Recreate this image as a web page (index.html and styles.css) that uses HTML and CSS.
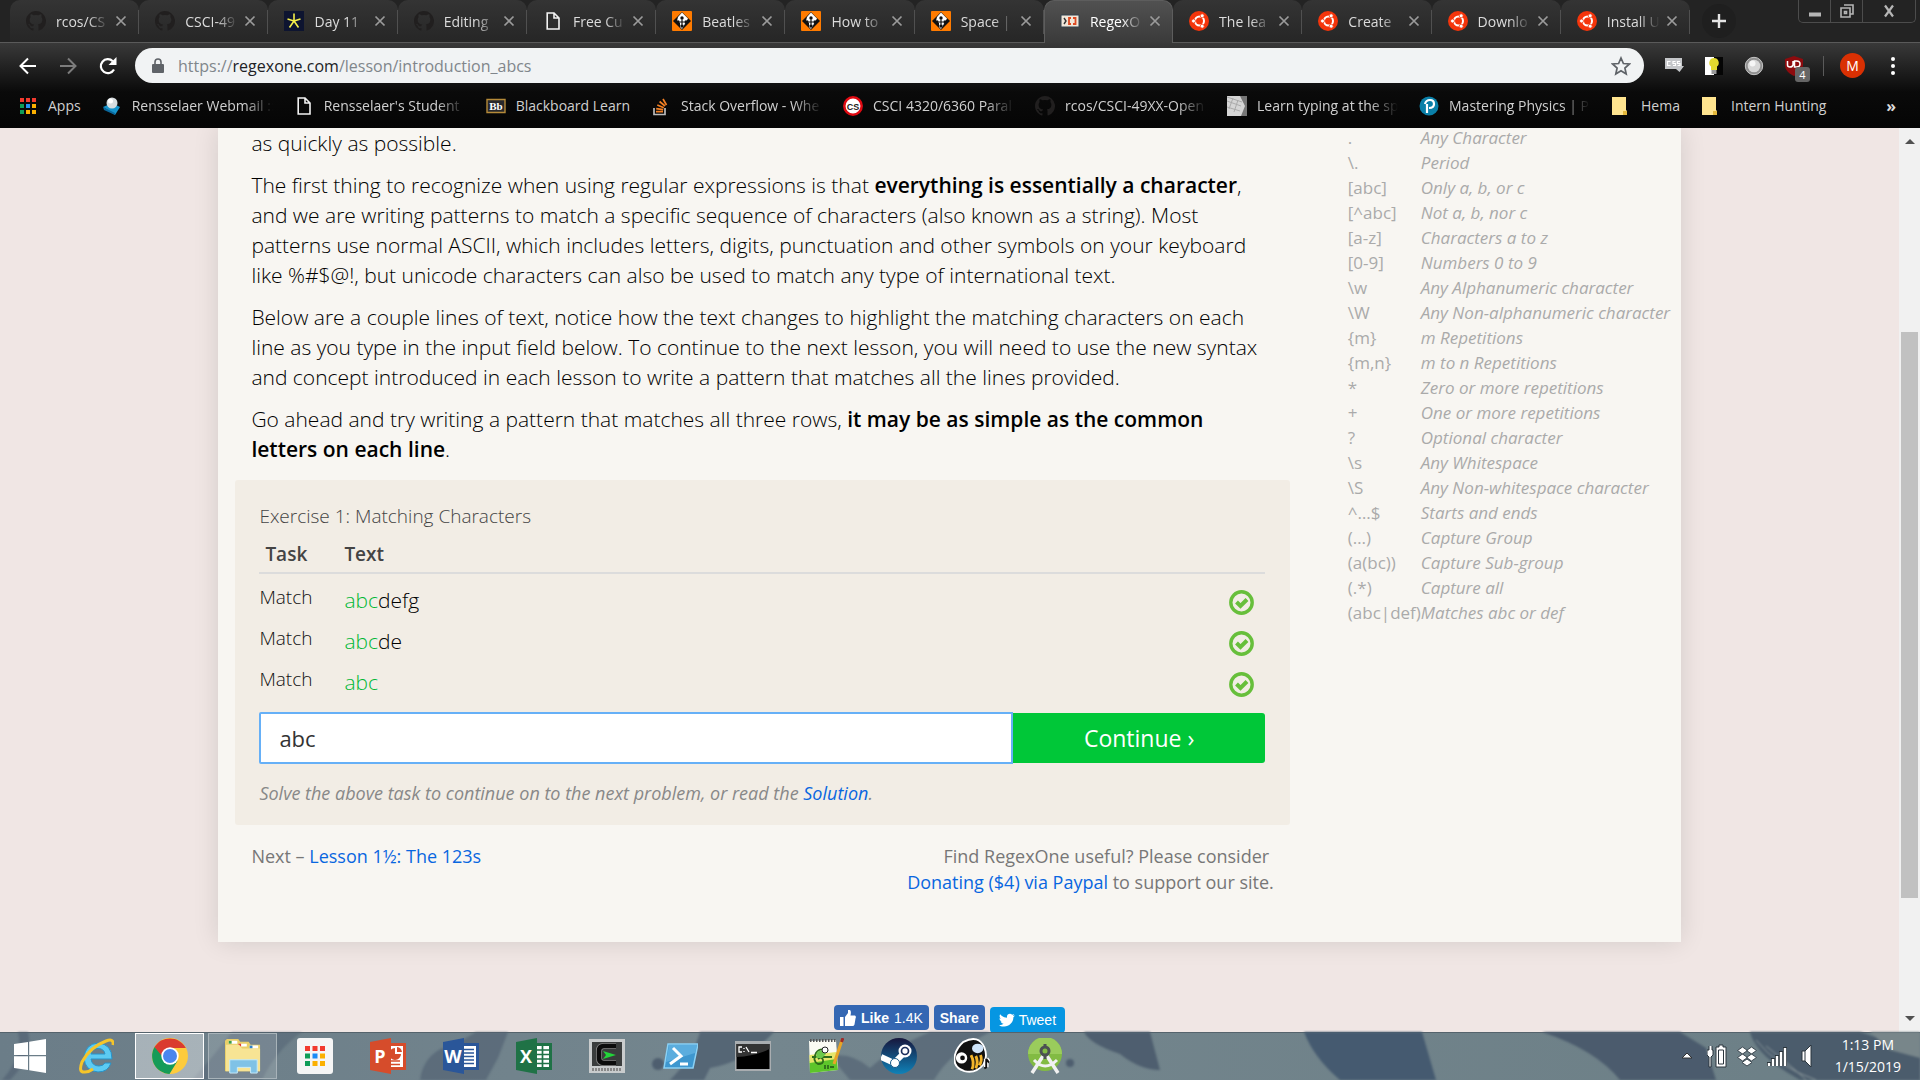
FILE: index.html
```html
<!DOCTYPE html>
<html lang="en">
<head>
<meta charset="utf-8">
<title>RegexOne - Learn Regular Expressions - Lesson 1: An Introduction, and the ABCs</title>
<link rel="stylesheet" href="styles.css">
</head>
<body>
<svg class="defs" aria-hidden="true">
  <symbol id="github" viewBox="0 0 16 16"><path fill="#211f1f" d="M8 0C3.6 0 0 3.6 0 8c0 3.5 2.3 6.500 5.500 7.600.4.1.5-.2.500-.4v-1.500c-2 .4-2.700-.9-2.900-1.400-.1-.3-.6-1-1-1.300-.3-.2-.8-.6 0-.6.700 0 1.200.6 1.300.9.8 1.300 2 .9 2.500.7.100-.6.300-1 .6-1.200-1.800-.2-3.600-.9-3.600-4 0-.9.300-1.600.8-2.100-.1-.2-.4-1 .1-2.100 0 0 .7-.2 2.200.8a7.500 7.500 0 0 1 4 0c1.500-1 2.200-.8 2.200-.8.400 1.100.2 1.900.1 2.100.5.600.8 1.300.8 2.100 0 3.100-1.900 3.700-3.600 3.900.3.300.5.800.5 1.500v3c0 .2.100.5.500.4A8 8 0 0 0 8 0z"/></symbol>
  <symbol id="ubuntu" viewBox="0 0 20 20"><circle cx="10" cy="10" r="10" fill="#f4350b"/><circle cx="10.500" cy="10" r="4.500" fill="none" stroke="#fff" stroke-width="2"/><g fill="#fff" stroke="#f4350b" stroke-width=".8"><circle cx="4.500" cy="10" r="2"/><circle cx="13.200" cy="4.800" r="2"/><circle cx="13.200" cy="15.200" r="2"/></g></symbol>
  <symbol id="diamond" viewBox="0 0 20 20"><rect width="20" height="20" rx="1" fill="#ff7b00"/><path d="M10 1l9 9-9 9-9-9z" fill="#111"/><path d="M10 1.500l6 6-2 3.500-4 7-2-2V12l-3-2 1-4z" fill="#fff"/><path d="M10 8.500v5M7.500 11h5" stroke="#111" stroke-width="1.200"/><g fill="#111"><circle cx="10" cy="7" r="1.700"/><circle cx="6" cy="11" r="1.700"/><circle cx="14" cy="11" r="1.700"/><circle cx="10" cy="15" r="1.700"/></g></symbol>
  <symbol id="page" viewBox="0 0 20 20"><path d="M4.200 2h6.800l5 5v11H4.200z M11 2v5h5" fill="none" stroke="#f2f2f2" stroke-width="1.600"/></symbol>
  <symbol id="cross" viewBox="0 0 12 12"><path d="M1.500 1.500l9 9m0-9l-9 9" stroke="#9b9b9b" stroke-width="1.700"/></symbol>
  <symbol id="folder" viewBox="0 0 20 20"><path d="M1 1h14v13l1 1v4H1z" fill="#ffe48f"/><path d="M12 15h4v4h-4z" fill="#e6b93c"/></symbol>
  <symbol id="check" viewBox="0 0 25 25"><circle cx="12.500" cy="12.500" r="10.700" fill="none" stroke="#67bf3b" stroke-width="3.400"/><path d="M7.500 12l4 4 6.500-6.500" fill="none" stroke="#67bf3b" stroke-width="4"/></symbol>
</svg>

<header class="browser">
  <div class="tabstrip">
    <ul class="tabs">
      <li class="tab"><svg class="fav"><use href="#github"/></svg><span class="tab-title">rcos/CS</span><button class="close" aria-label="Close tab"><svg><use href="#cross"/></svg></button></li>
      <li class="tab"><svg class="fav"><use href="#github"/></svg><span class="tab-title">CSCI-49</span><button class="close" aria-label="Close tab"><svg><use href="#cross"/></svg></button></li>
      <li class="tab"><svg class="fav" viewBox="0 0 20 20"><path fill="#0d1430" d="M0 0h20v20H0z"/><path d="M10 10V2.500M10 10l6.500-2M10 10l4.500 6.500M10 10l-4.500 6.500M10 10L3.500 8" stroke="#f5ef4a" stroke-width="1.600"/></svg><span class="tab-title">Day 11</span><button class="close" aria-label="Close tab"><svg><use href="#cross"/></svg></button></li>
      <li class="tab"><svg class="fav"><use href="#github"/></svg><span class="tab-title">Editing</span><button class="close" aria-label="Close tab"><svg><use href="#cross"/></svg></button></li>
      <li class="tab"><svg class="fav"><use href="#page"/></svg><span class="tab-title">Free Cu</span><button class="close" aria-label="Close tab"><svg><use href="#cross"/></svg></button></li>
      <li class="tab"><svg class="fav"><use href="#diamond"/></svg><span class="tab-title">Beatles</span><button class="close" aria-label="Close tab"><svg><use href="#cross"/></svg></button></li>
      <li class="tab"><svg class="fav"><use href="#diamond"/></svg><span class="tab-title">How to</span><button class="close" aria-label="Close tab"><svg><use href="#cross"/></svg></button></li>
      <li class="tab"><svg class="fav"><use href="#diamond"/></svg><span class="tab-title">Space |</span><button class="close" aria-label="Close tab"><svg><use href="#cross"/></svg></button></li>
      <li class="tab active"><svg class="fav" viewBox="0 0 20 20"><path fill="#f1e7da" stroke="#33434f" d="M1 4h18v12H1z"/><path d="M4 7l2 3-2 3" fill="none" stroke="#333" stroke-width="1.400"/><path d="M11 7H9v6h2M13 7h2.500v6H13" fill="none" stroke="#dd4a22" stroke-width="1.800"/></svg><span class="tab-title">RegexO</span><button class="close" aria-label="Close tab"><svg><use href="#cross"/></svg></button></li>
      <li class="tab"><svg class="fav"><use href="#ubuntu"/></svg><span class="tab-title">The lea</span><button class="close" aria-label="Close tab"><svg><use href="#cross"/></svg></button></li>
      <li class="tab"><svg class="fav"><use href="#ubuntu"/></svg><span class="tab-title">Create</span><button class="close" aria-label="Close tab"><svg><use href="#cross"/></svg></button></li>
      <li class="tab"><svg class="fav"><use href="#ubuntu"/></svg><span class="tab-title">Downlo</span><button class="close" aria-label="Close tab"><svg><use href="#cross"/></svg></button></li>
      <li class="tab"><svg class="fav"><use href="#ubuntu"/></svg><span class="tab-title">Install U</span><button class="close" aria-label="Close tab"><svg><use href="#cross"/></svg></button></li>
    </ul>
    <button class="newtab" aria-label="New tab"><svg viewBox="0 0 16 16"><path d="M8 1v14M1 8h14" stroke="#e4e4e4" stroke-width="2.400"/></svg></button>
    <div class="winctl">
      <button aria-label="Minimize"><svg viewBox="0 0 16 16"><path d="M2 9.500h12v4H2z" fill="#b5b5b5"/></svg></button>
      <button aria-label="Restore"><svg viewBox="0 0 16 16"><path d="M5 2h9v9h-3M2 5h9v9H2zM5.500 8.500h2v2h-2z" fill="none" stroke="#b5b5b5" stroke-width="1.600"/></svg></button>
      <button class="wide" aria-label="Close"><svg viewBox="0 0 16 16"><path d="M4 2.500l8 11M12 2.500l-8 11" stroke="#b5b5b5" stroke-width="2.200"/></svg></button>
    </div>
  </div>
  <div class="toolbar">
    <button class="nav" aria-label="Back"><svg viewBox="0 0 18 18"><path d="M17 9H2M9 1.500L1.500 9 9 16.500" fill="none" stroke="#fff" stroke-width="2"/></svg></button>
    <button class="nav" aria-label="Forward"><svg viewBox="0 0 18 18"><path d="M1 9h15M9 1.500L16.500 9 9 16.500" fill="none" stroke="#7c7c7c" stroke-width="2"/></svg></button>
    <button class="nav" aria-label="Reload"><svg viewBox="0 0 18 18"><path d="M15 12.500a7 7 0 1 1-1.200-8.300" fill="none" stroke="#fff" stroke-width="2.200"/><path d="M17.500 0v8h-8z" fill="#fff"/></svg></button>
    <div class="omnibox">
      <svg class="lock" viewBox="0 0 12 16"><path d="M1 6h10a1 1 0 0 1 1 1v7a1 1 0 0 1-1 1H1a1 1 0 0 1-1-1V7a1 1 0 0 1 1-1z" fill="#5f6368"/><path d="M3 7V4a3 3 0 0 1 6 0v3" fill="none" stroke="#5f6368" stroke-width="1.600"/></svg>
      <span class="url">https://<b>regexone.com</b>/lesson/introduction_abcs</span>
      <button class="star" aria-label="Bookmark this page"><svg viewBox="0 0 20 20"><path d="M10 2l2.400 5.500 6 .5-4.500 4 1.300 6-5.200-3.200L4.800 18l1.300-6-4.500-4 6-.5z" fill="none" stroke="#5f6368" stroke-width="1.700"/></svg></button>
    </div>
    <div class="exts">
      <button class="ext" aria-label="CSS viewer"><svg viewBox="0 0 20 20"><path d="M1 2h17v8h2l-4.500 6L12 13H1z" fill="#c4c6c9"/><path d="M6.500 5.500h-3v4h3M11.500 5.500H9v2h2.500v2H9M16 5.500h-2.500v2H16v2h-2.500" fill="none" stroke="#fff" stroke-width="1.200"/></svg></button>
      <button class="ext" aria-label="Turn off the lights"><svg viewBox="0 0 20 20"><path fill="#fff" d="M1 1h9v18H1z"/><path fill="#050505" d="M10 1h9v18h-9z"/><path d="M10 2a4.800 4.800 0 0 0-3 8.500V14h6v-3.500A4.800 4.800 0 0 0 10 2z" fill="#e2d92f"/><path d="M7.500 14h5v4h-5z" fill="#999"/></svg></button>
      <button class="ext" aria-label="Extension"><svg viewBox="0 0 20 20"><circle cx="10" cy="10" r="8.700" fill="#8f8f8f" stroke="#c6c6c6"/><circle cx="10" cy="10" r="6.300" fill="#d8d8d8"/><circle cx="8.500" cy="7.500" r="3" fill="#f6f6f6"/></svg></button>
      <button class="ext" aria-label="uBlock Origin"><svg viewBox="0 0 20 20"><path d="M10 0l9 3v6c0 6-5 9-9 11-4-2-9-5-9-11V3z" fill="#8d0b0e"/><path d="M3.500 5v4q0 2 2.500 2t3-2V5M10.500 5v6h2q3.500 0 3.500-3t-3.500-3z" fill="none" stroke="#fff" stroke-width="1.500"/></svg><span class="count">4</span></button>
    </div>
    <span class="sep"></span>
    <button class="avatar" aria-label="Profile">M</button>
    <button class="kebab" aria-label="Menu"><svg viewBox="0 0 6 20"><g fill="#fff"><circle cx="3" cy="3" r="2"/><circle cx="3" cy="10" r="2"/><circle cx="3" cy="17" r="2"/></g></svg></button>
  </div>
  <nav class="bookmarks" aria-label="Bookmarks">
    <a href="#"><svg viewBox="0 0 20 20"><path d="M2 2h4v4H2z" fill="#f23a2e"/><path d="M8 2h4v4H8zM14 2h4v4h-4z" fill="#f23a2e"/><path d="M2 8h4v4H2zM2 14h4v4H2z" fill="#0f9d58"/><path d="M8 8h4v4H8z" fill="#2491f5"/><path d="M14 8h4v4h-4zM8 14h4v4H8zM14 14h4v4h-4z" fill="#fbb000"/></svg><span>Apps</span></a>
    <a href="#" class="long"><svg viewBox="0 0 20 20"><path d="M1 11l9-4 8 4-5 8z" fill="#1694cc"/><path d="M1 11l12 6v2L2 14z" fill="#0a679b"/><circle cx="10" cy="7" r="5.500" fill="#d7dde0"/><circle cx="8.500" cy="5" r="2.500" fill="#fff"/></svg><span>Rensselaer Webmail ::</span></a>
    <a href="#" class="long"><svg><use href="#page"/></svg><span>Rensselaer's Student</span></a>
    <a href="#"><svg viewBox="0 0 20 20"><path d="M1 3.500h18v13H1z" fill="#28282b" stroke="#b58a39" stroke-width="1.400"/><text x="10" y="14" text-anchor="middle" class="bb">Bb</text></svg><span>Blackboard Learn</span></a>
    <a href="#" class="long"><svg viewBox="0 0 20 20"><path d="M3 12v6.500h11V12" fill="none" stroke="#bcbbbb" stroke-width="1.700"/><path d="M5 15.700h7M5.200 12.600l7 1M6.300 9l6.500 2.700M8.600 5.500l5.400 4.500M12 3l3.500 6" stroke="#f48024" stroke-width="1.700"/></svg><span>Stack Overflow - Whe</span></a>
    <a href="#" class="long"><svg viewBox="0 0 20 20"><circle cx="10" cy="10" r="8.700" fill="#fff" stroke="#e00a12" stroke-width="2.500"/><text x="10" y="13.500" text-anchor="middle" class="cs">CS</text></svg><span>CSCI 4320/6360 Paral</span></a>
    <a href="#" class="long"><svg><use href="#github"/></svg><span>rcos/CSCI-49XX-Open</span></a>
    <a href="#" class="long"><svg viewBox="0 0 20 20"><path fill="#d5d5d5" d="M0 0h20v20H0z"/><path d="M0 5l14 5M0 11l13 4M6 2L2 13M11 4L7 16M0 1l15 5" stroke="#aaa"/><path d="M13 0l5 10-4 10h6V0z" fill="#777"/></svg><span>Learn typing at the sp</span></a>
    <a href="#" class="long"><svg viewBox="0 0 20 20"><circle cx="10" cy="10" r="9.500" fill="#0a7fa8"/><path d="M8 17V8M6 8q1-4 5-4t4 4-5 4" fill="none" stroke="#fff" stroke-width="2.200"/></svg><span>Mastering Physics | Pe</span></a>
    <a href="#"><svg><use href="#folder"/></svg><span>Hema</span></a>
    <a href="#"><svg><use href="#folder"/></svg><span>Intern Hunting</span></a>
    <button class="more" aria-label="More bookmarks">»</button>
  </nav>
</header>

<div class="viewport">
  <div class="page">
    <div class="card">
      <main class="lesson">
        <div class="prose">
          <p>as quickly as possible.</p>
          <p>The first thing to recognize when using regular expressions is that <b>everything is essentially a character</b>,<br>and we are writing patterns to match a specific sequence of characters (also known as a string). Most<br>patterns use normal ASCII, which includes letters, digits, punctuation and other symbols on your keyboard<br>like %#$@!, but unicode characters can also be used to match any type of international text.</p>
          <p>Below are a couple lines of text, notice how the text changes to highlight the matching characters on each<br>line as you type in the input field below. To continue to the next lesson, you will need to use the new syntax<br>and concept introduced in each lesson to write a pattern that matches all the lines provided.</p>
          <p>Go ahead and try writing a pattern that matches all three rows, <b>it may be as simple as the common<br>letters on each line</b>.</p>
        </div>
        <section class="exercise">
          <h2><label for="pattern">Exercise 1: Matching Characters</label></h2>
          <table class="tasks">
            <thead><tr><th>Task</th><th colspan="2">Text</th></tr></thead>
            <tbody>
              <tr><td>Match</td><td class="text"><em>abc</em>defg</td><td class="result"><svg><use href="#check"/></svg></td></tr>
              <tr><td>Match</td><td class="text"><em>abc</em>de</td><td class="result"><svg><use href="#check"/></svg></td></tr>
              <tr><td>Match</td><td class="text"><em>abc</em></td><td class="result"><svg><use href="#check"/></svg></td></tr>
            </tbody>
          </table>
          <form class="answer">
            <input id="pattern" type="text" value="abc">
            <button type="button">Continue ›</button>
          </form>
          <p class="hint">Solve the above task to continue on to the next problem, or read the <a href="#">Solution</a>.</p>
        </section>
        <div class="after">
          <p>Next – <a href="#">Lesson 1½: The 123s</a></p>
          <p class="donate">Find RegexOne useful? Please consider&nbsp;<br><a href="#">Donating ($4) via Paypal</a> to support our site.</p>
        </div>
      </main>
      <aside>
        <table class="notes">
          <tr><td>.</td><td>Any Character</td></tr>
          <tr><td>\.</td><td>Period</td></tr>
          <tr><td>[abc]</td><td>Only a, b, or c</td></tr>
          <tr><td>[^abc]</td><td>Not a, b, nor c</td></tr>
          <tr><td>[a-z]</td><td>Characters a to z</td></tr>
          <tr><td>[0-9]</td><td>Numbers 0 to 9</td></tr>
          <tr><td>\w</td><td>Any Alphanumeric character</td></tr>
          <tr><td>\W</td><td>Any Non-alphanumeric character</td></tr>
          <tr><td>{m}</td><td>m Repetitions</td></tr>
          <tr><td>{m,n}</td><td>m to n Repetitions</td></tr>
          <tr><td>*</td><td>Zero or more repetitions</td></tr>
          <tr><td>+</td><td>One or more repetitions</td></tr>
          <tr><td>?</td><td>Optional character</td></tr>
          <tr><td>\s</td><td>Any Whitespace</td></tr>
          <tr><td>\S</td><td>Any Non-whitespace character</td></tr>
          <tr><td>^…$</td><td>Starts and ends</td></tr>
          <tr><td>(…)</td><td>Capture Group</td></tr>
          <tr><td>(a(bc))</td><td>Capture Sub-group</td></tr>
          <tr><td>(.*)</td><td>Capture all</td></tr>
          <tr><td>(abc|def)</td><td>Matches abc or def</td></tr>
        </table>
      </aside>
    </div>
    <div class="social">
      <button class="like"><svg viewBox="0 0 16 16"><path d="M0 7h3.500v9H0zM5 7l3-4V0h2q1.500 1 .5 5.500H15q1.500 1 .5 3l-1 6q-.5 1.500-2 1.500H5z" fill="#fff"/></svg><b>Like</b> 1.4K</button>
      <button class="share"><b>Share</b></button>
      <button class="tweet"><svg viewBox="0 0 16 16"><path d="M16 3.500l-1.600 1.700C14.500 11 9.500 15 4.500 14.500 2.500 14.500 1 14 0 13.200c1.800.1 3.400-.4 4.600-1.400-1.500-.1-2.500-1-3-2.200h1.300C1.300 9.200.5 7.900.5 6.300l1.400.4C.4 5.500.3 3.700 1.100 2.300 3 4.500 5.300 5.600 8 5.800 7.300 2.300 11 .5 13.200 2.800l2-.7-1.300 1.800z" fill="#fff"/></svg>Tweet</button>
    </div>
  </div>
  <div class="scrollbar"><span class="arrow up"></span><span class="thumb"></span><span class="arrow down"></span></div>
</div>

<footer class="taskbar">
  <svg class="wallpaper" viewBox="0 0 1920 48" preserveAspectRatio="none" aria-hidden="true">
    <g fill="#4e5e6f">
      <path d="M18 0q6 24-16 48h8Q34 24 28 0z" opacity=".6"/>
      <path d="M232 0q-20 26-40 48h70q14-30 40-48z" opacity=".45"/>
      <path d="M420 48q4-30 36-36l20-12h32l-10 26-12 22z" opacity=".6"/>
      <path d="M700 0h74q-28 30-64 36l-6 12H670q24-24 30-48z" opacity=".8"/>
      <path d="M830 24q22-4 40 12 22-20 60-36h60q-40 20-56 48h-84z" opacity=".6"/>
      <path d="M1084 0h66l10 38q-20 0-40-16-30-10-36-22z"/>
      <path d="M1304 0h118l14 48h-96q-26-22-36-48z" fill="#455a70"/>
      <path d="M1542 0h138l26 16 10 32h-96q-24-30-78-48z" fill="#4b5b6d"/>
      <path d="M1750 0h110l60 20v28H1800q-44-24-50-48z" fill="#4b5c6c"/>
      <circle cx="1070" cy="31" r="4"/><circle cx="658" cy="32" r="6"/>
    </g>
    <path d="M1870 0h50v26l-30-8z" fill="#78868a"/>
    <path d="M1756 8q20 26 60 40M1766 14q30 24 40 34" stroke="#8d9a9d" fill="none"/>
  </svg>
  <div class="apps">
    <button class="app start" aria-label="Start"><svg viewBox="0 0 36 36"><path d="M2 6l14-2v13H2zM17.200 3.800L34 1v16H17.200zM2 18.200h14V32L2 30zM17.200 18.200H34V35l-16.800-2.800z" fill="#fff"/></svg></button>
    <button class="app" aria-label="Internet Explorer"><svg viewBox="0 0 36 36"><path d="M34 21H13q1 7 8 7 4 0 6-3h6q-3 9-13 9Q7 33 6 20 7 6 20 5q14 1 14 16zM13 16h14q-1-5.500-7-5.500T13 16z" fill="#5ccbf3" stroke="#2793c9"/><path d="M35 7q1-7-7-4Q12 9 4 24q-4 11 3 10 4 0 8-3" fill="none" stroke="#f5c52a" stroke-width="3"/></svg></button>
    <button class="app current" aria-label="Google Chrome"><svg viewBox="0 0 36 36"><circle cx="18" cy="18" r="18" fill="#fdcb3c"/><path d="M2.500 9A18 18 0 0 1 33.500 9.500L34 10H18l-8 12z" fill="#da3b2f"/><path d="M2.500 9a18 18 0 0 0 15 27l8-13-9 3z" fill="#159b58"/><circle cx="18" cy="18" r="8.700" fill="#fff"/><circle cx="18" cy="18" r="7" fill="#4a86ee"/></svg></button>
    <button class="app open" aria-label="File Explorer"><svg viewBox="0 0 38 36"><path d="M2 0h12l2 3h9l2 3h10v28H0V2z" fill="#e9cf68"/><path d="M4 2h9v3H4zM14 5h9v3h-9zM26 7h9v3h-9z" fill="#fff"/><path d="M4 2h3v3H4z" fill="#3a9d45"/><path d="M14 5h3v3h-3z" fill="#e0402c"/><path d="M26 7h3v3h-3z" fill="#2f83c9"/><path d="M1 6h14l3 4h19v24H1z" fill="#f7e494"/><path d="M5 22h29v14h-7v-6H13v6H5z" fill="#7fc2e6" stroke="#c8ecfb"/></svg></button>
    <button class="app" aria-label="App Launcher"><svg viewBox="0 0 36 36"><rect width="36" height="36" rx="3" fill="#f5f5f5"/><path d="M8 8h5v5H8zM15.500 8h5v5h-5zM23 8h5v5h-5z" fill="#f23a2e"/><path d="M8 15.500h5v5H8zM8 23h5v5H8z" fill="#0f9d58"/><path d="M15.500 15.500h5v5h-5z" fill="#1a8bf5"/><path d="M23 15.500h5v5h-5zM15.500 23h5v5h-5zM23 23h5v5h-5z" fill="#fbb000"/></svg></button>
    <button class="app" aria-label="PowerPoint"><svg viewBox="0 0 36 36"><path d="M18 5h18v27H18z" fill="#d64c2b"/><path d="M21 8h12v21H21z" fill="#fff"/><path d="M21 23h9M21 26.500h9" stroke="#d64c2b" stroke-width="1.700"/><path d="M25 10v6h6a6 6 0 1 1-6-6zM27 9a6 6 0 0 1 5 5h-5z" fill="#d64c2b"/><path d="M0 4l21-4v36L0 32z" fill="#d64c2b"/><text x="10" y="25" text-anchor="middle" class="office">P</text></svg></button>
    <button class="app" aria-label="Word"><svg viewBox="0 0 36 36"><path d="M18 5h18v27H18z" fill="#2a5699"/><path d="M20 8h13v21H20z" fill="#fff"/><path d="M20 11.500h11M20 15h11M20 18.500h11M20 22h11M20 25.500h11" stroke="#2a5699" stroke-width="1.700"/><path d="M0 4l21-4v36L0 32z" fill="#2a5699"/><text x="10" y="25" text-anchor="middle" class="office">W</text></svg></button>
    <button class="app" aria-label="Excel"><svg viewBox="0 0 36 36"><path d="M18 5h18v27H18z" fill="#1f7246"/><path d="M20 8h13v21H20z" fill="#fff"/><path d="M20 12h13M20 16.500h13M20 21h13M20 25.500h13M26.500 8v21" stroke="#1f7246" stroke-width="1.700"/><path d="M0 4l21-4v36L0 32z" fill="#1f7246"/><text x="10" y="25" text-anchor="middle" class="office">X</text></svg></button>
    <button class="app" aria-label="Terminal"><svg viewBox="0 0 36 36"><path d="M0 1h36v34H0z" fill="#c9cccd"/><path d="M3 4h30v24H3z" fill="#3a3d3d"/><path d="M27 8H15q-5 0-5 5v7q0 5 5 5h12" fill="none" stroke="#888" stroke-width="6"/><path d="M27 8H15q-5 0-5 5v7q0 5 5 5h12" fill="none" stroke="#0c0c0c" stroke-width="4.500"/><path d="M14 13l13 4-13 4 3-4z" fill="#23d43a"/><path d="M3 31.500h30" stroke="#888" stroke-width="3" stroke-dasharray="2 1"/></svg></button>
    <button class="app" aria-label="PowerShell"><svg viewBox="0 0 36 36"><path d="M6 6h30l-5 24H2z" fill="#3e97cf" stroke="#8bd0f3" stroke-width="1.500"/><path d="M7 7h28l-2 8-29 9z" fill="#70bde8" opacity=".6"/><path d="M11 10l8 8-11 8M18 26h8" fill="none" stroke="#fff" stroke-width="3"/></svg></button>
    <button class="app" aria-label="Command Prompt"><svg viewBox="0 0 36 36"><path d="M0 3h36v30H0z" fill="#a9adb0"/><path d="M1.500 6h33v25h-33z" fill="#000"/><path d="M1.500 6h33v5Q20 18 1.500 19z" fill="#333"/><path d="M7 9H4v5h3M9 10v1M9 13v1M11 9l3 5M16 14.500h6" fill="none" stroke="#fff" stroke-width="1.300"/></svg></button>
    <button class="app" aria-label="Notepad++"><svg viewBox="0 0 36 36"><path d="M1 3l27-1 2 30-28 3z" fill="#fbfbf3"/><path d="M1.500 23l27-4 1.500 13-28 3z" fill="#5dc52b"/><path d="M1.300 17l27-3 .4 7-27 4z" fill="#e6e66a"/><path d="M2 2.500h26" stroke="#555" stroke-width="3" stroke-dasharray="1.500 1.500"/><path d="M20 13q-8-4-12 2-4 8 2 11 6 0 5-4t-5-1M4 19h20M17 27v4M20 27v4M22 29h4" fill="none" stroke="#2e6b1b" stroke-width="1.800"/><path d="M9 14q5-4 9 2l-4 4H8z" fill="#6cc84a"/><circle cx="17" cy="12" r="3" fill="#fff" stroke="#222"/><path d="M34 2l-8 24" stroke="#e9a526" stroke-width="3"/><path d="M35 0l-1.500 4" stroke="#9c2a2a" stroke-width="3"/></svg></button>
    <button class="app" aria-label="Steam"><svg viewBox="0 0 36 36"><defs><linearGradient id="steam" x2="0" y2="1"><stop stop-color="#17163c"/><stop offset="1" stop-color="#0f82b8"/></linearGradient></defs><circle cx="18" cy="18" r="18" fill="url(#steam)"/><path d="M0 19l13 6 10-10" fill="none" stroke="#fff" stroke-width="6"/><circle cx="24" cy="13" r="6.500" fill="#fff"/><circle cx="24" cy="13" r="3.500" fill="#fff" stroke="#1b2e5c" stroke-width="1.700"/><circle cx="14" cy="25" r="4.500" fill="#fff" stroke="#175988"/></svg></button>
    <button class="app" aria-label="MusicBee"><svg viewBox="0 0 38 36"><path d="M10 3q16-8 22 6 4 10-1 18-8 10-20 7Q-2 30 1 17 3 9 10 3z" fill="#111" stroke="#fff" stroke-width="2"/><ellipse cx="25" cy="10" rx="6" ry="5" fill="#cfe4f9"/><path d="M18 17q4 8 1 15M23 18q3 6 0 13M28 17q2 5-1 11" fill="none" stroke="#f3b52a" stroke-width="3"/><circle cx="8" cy="20" r="6" fill="#fff"/><circle cx="9" cy="20" r="2.500" fill="#111"/><path d="M34 21v9M34 21l3 4" stroke="#fff" stroke-width="5"/><path d="M34 21v9l-2 1M34 21l3 4" fill="none" stroke="#111" stroke-width="2"/></svg></button>
    <button class="app" aria-label="Android Studio"><svg viewBox="0 0 36 36"><circle cx="18" cy="16" r="17" fill="#82bb43"/><path d="M1 16a17 17 0 0 1 34 0z" fill="#9acc5c"/><path d="M16 18L5 35M20 18l11 17" stroke="#f1f1f1" stroke-width="3.500"/><path d="M7 22q11 12 23 0" fill="none" stroke="#f1f1f1" stroke-width="3"/><circle cx="18" cy="13" r="4" fill="#82bb43" stroke="#4c5052" stroke-width="3"/><path d="M18 6v3M18 17v4" stroke="#4c5052" stroke-width="3"/></svg></button>
  </div>
  <div class="tray">
    <svg viewBox="0 0 20 24"><path d="M5 14l5-5 5 5z" fill="#fff" stroke="#333"/></svg>
    <svg viewBox="0 0 20 24"><g stroke="#2b353c" fill="#fff"><path d="M2 2v4H0v5l2 2v10h2V13l2-2V6H5V2"/><path d="M9 3h3V1h4v2h3v20H9z"/></g><path d="M11.500 6h5v14h-5z" fill="#fff" stroke="#2b353c"/></svg>
    <svg viewBox="0 0 20 24"><path d="M5.500 3l5 3.500-5 3.500-5-3.500zM14.500 3l5 3.500-5 3.500-5-3.500zM5.500 10l5 3.500-5 3.500-5-3.500zM14.500 10l5 3.500-5 3.500-5-3.500zM10 15l5 3.500-5 3.500-5-3.500z" fill="#fff" stroke="#3c4850"/></svg>
    <svg viewBox="0 0 20 24"><path d="M2 22v-4M6 22v-8M10 22V11M14 22V7M18 22V3" stroke="#2b353c" stroke-width="4"/><path d="M2 22v-3M6 22v-7M10 22V12M14 22V8M18 22V4" stroke="#fff" stroke-width="2.400"/></svg>
    <svg viewBox="0 0 20 24"><path d="M5 7h3l6-6v22l-6-6H5z" fill="#fff" stroke="#2b353c"/><path d="M8 7v10" stroke="#2b353c"/></svg>
  </div>
  <time class="clock" datetime="2019-01-15T13:13">1:13 PM<br>1/15/2019</time>
</footer>
</body>
</html>
```
FILE: styles.css
```css
*{box-sizing:border-box}
body{margin:0;height:100vh;display:flex;flex-direction:column;overflow:hidden;font-family:"Open Sans","Noto Sans",sans-serif;color:#000}
button,input{font:inherit;margin:0;padding:0;border:0;background:none;color:inherit}
p,h2,ul{margin:0;padding:0}
a{color:#0866e0;text-decoration:none}
svg{display:block;flex:none}
.defs{position:absolute;width:0;height:0}

/* browser frame */
.browser{flex:none;color:#dcdcdc;font-size:14px;background:linear-gradient(#3a3a3a 42px,#0a0a0a 92px,#050505)}
.tabstrip{display:flex;height:43px;padding:0 4px 0 10px;background:#232323;border-bottom:1px solid #5a5a5a}
.tabs{flex:1;max-width:1680px;display:flex;list-style:none}
.tab{flex:1;min-width:0;height:42px;display:flex;align-items:center;padding:0 12px 0 16px;background:linear-gradient(#343434,#262626);border-radius:10px 10px 0 0;position:relative}
.tab:not(.active)::after{content:"";position:absolute;right:0;top:10px;height:24px;width:1px;background:#505050}
.tab.active{height:43px;margin-bottom:-1px;padding-bottom:2px;background:linear-gradient(#515151,#3a3a3a);border:1px solid #5d5d5d;border-bottom:0;color:#fff;padding-right:11px;padding-left:15px}
.fav{width:20px;height:20px}
.tab-title{flex:1;min-width:0;margin:0 6px 0 10px;white-space:nowrap;overflow:hidden;-webkit-mask-image:linear-gradient(90deg,#000 60%,transparent);mask-image:linear-gradient(90deg,#000 60%,transparent)}
.close svg{width:12px;height:12px}
.newtab{width:34px;height:34px;margin:4px 0 0 12px;display:grid;place-items:center;background:#1f1f1f;border-radius:17px}
.newtab svg{width:16px;height:16px}
.winctl{display:flex;height:23px;margin-left:auto;border:1px solid #4c4c4c;border-top:0;border-radius:0 0 5px 5px;overflow:hidden}
.winctl button{width:32px;display:grid;place-items:center;border-right:1px solid #4c4c4c}
.winctl .wide{width:52px;border:0}
.winctl svg{width:16px;height:16px}
.toolbar{display:flex;align-items:center;height:45px;padding:0 24px 0 8px}
.nav{width:40px;display:grid;place-items:center}
.nav svg{width:18px;height:18px}
.omnibox{flex:1;display:flex;align-items:center;height:35px;margin:0 20px 0 7px;padding:0 13px 0 17px;border-radius:18px;background:#f1f3f4}
.lock{width:12px;height:16px}
.url{flex:1;padding-left:14px;font-size:16px;color:#80868b}
.url b{font-weight:400;color:#202124}
.star svg,.ext svg{width:20px;height:20px}
.exts{display:flex;gap:20px}
.ext{position:relative}
.count{position:absolute;left:11px;top:11px;width:15px;height:15px;border-radius:3px;background:#666;color:#fff;font-size:11px;line-height:15px}
.sep{width:1px;height:20px;margin:0 16px 0 19px;background:#5a5a5a}
.avatar{width:25px;height:25px;border-radius:50%;background:#d93003;color:#fff}
.kebab{margin-left:25px}
.kebab svg{width:6px;height:20px}
.bookmarks{display:flex;align-items:center;gap:21px;height:40px;padding:0 24px 5px 18px}
.bookmarks a{display:flex;align-items:center;gap:10px;color:#d0d0d0}
.bookmarks a svg{width:20px;height:20px}
.bookmarks span{white-space:nowrap}
.bookmarks .long span{width:141px;overflow:hidden;-webkit-mask-image:linear-gradient(90deg,#000 80%,transparent);mask-image:linear-gradient(90deg,#000 80%,transparent)}
.more{margin-left:auto;font-weight:700;font-size:16px}
.bb{font:bold 11px "Liberation Serif",serif;fill:#fff}
.cs{font:bold 9px "Liberation Sans",sans-serif;fill:#222}

/* web page */
.viewport{flex:1;min-height:0;display:flex;background:#f0e6e4}
.page{flex:1;min-width:0;overflow:hidden}
.card{width:77%;margin:0 auto;padding:0 0 47px 17px;display:grid;grid-template-columns:1055fr 333fr;column-gap:58px;background:#f8f6f2;box-shadow:0 0 24px rgba(0,0,0,.12)}
.prose{padding:0 0 0 16px;font-size:21px;line-height:30px;font-weight:300;white-space:nowrap}
.prose p{margin-bottom:12px}
.prose p:last-child{margin-bottom:16px}
.prose b{font-weight:600}
.exercise{padding:23px 25px 17px 24px;border-radius:3px;background:#f2ede5}
.exercise h2{font-size:19px;line-height:26px;font-weight:300;color:#444}
.tasks{width:100%;border-collapse:collapse;font-size:19px;font-weight:300}
.tasks th{height:44px;padding:6px 0 0;text-align:left;font-weight:600;font-size:19px;color:#444;border-bottom:2px solid #dcdcdc}
.tasks th:first-child{width:85px;padding-left:6px}
.tasks td{height:41px;padding:4px 0 0;line-height:24px;vertical-align:top;color:#111}
.tasks tbody::before{content:"";display:block;height:7px}
.tasks td.text{font-size:21px;padding-top:7px;color:#000}
.tasks em{font-style:normal;color:#00b835}
.tasks .result{width:36px;padding-top:9px}
.result svg{width:25px;height:25px}
.answer{display:grid;grid-template-columns:3fr 1fr;margin-top:8px}
.answer input{min-width:0;height:52px;padding:0 18px;font-size:22px;color:#333;background:#fff;border:2px solid #66b0f7;border-radius:2px 0 0 2px}
.answer button{height:50px;margin:1px 0;font-size:23px;color:#fff;background:#00c738;border-radius:0 3px 3px 0}
.hint{margin-top:14px;font-size:18px;line-height:30px;font-style:italic;color:#888}
.after{display:flex;justify-content:space-between;padding:18px 16px 0;font-size:18px;line-height:26px;color:#777}
.donate{text-align:right}
.notes{border-collapse:collapse;font-size:17px;line-height:25px;color:#aaa;white-space:nowrap;margin-top:-3px}
.notes td{padding:0}
.notes td:first-child{width:73px;max-width:73px}
.notes td:last-child{font-style:italic}
.social{display:flex;justify-content:center;gap:5px;margin-top:63px;font:14px "Liberation Sans",sans-serif;color:#fff}
.social button{display:flex;align-items:center;gap:5px;height:25px;border-radius:4px;background:#3467b3;padding:0 6px}
.social .tweet{height:26px;margin-top:2px;padding:0 9px;gap:4px;background:#0696e2}
.social svg{width:16px;height:16px}
.scrollbar{flex:none;width:21px;display:flex;flex-direction:column;align-items:center;padding:11px 0;background:#f1f1f1}
.thumb{width:17px;flex:0 0 566px;background:#c1c1c1}
.arrow{border:5px solid transparent}
.up{border-top:0;border-bottom-color:#505050;margin-bottom:188px}
.down{border-bottom:0;border-top-color:#505050;margin-top:auto}

/* taskbar */
.taskbar{flex:none;position:relative;display:flex;align-items:center;height:48px;padding-right:19px;background:linear-gradient(90deg,#6b7d88,#74868e 40%,#6c7f86);box-shadow:inset 0 1px #55636c}
.wallpaper{position:absolute;inset:0;width:100%;height:100%;filter:blur(1px)}
.apps{flex:1;display:flex;position:relative}
.app{width:73px;height:46px;display:grid;place-items:center}
.app svg{width:36px;height:36px}
.start{width:59px}
.current,.open{width:69px;margin-right:4px}
.current{margin-left:3px;border:1px solid #fff;background:rgba(255,255,255,.4)}
.open{border:1px solid #a8b3b9;background:rgba(255,255,255,.15);margin-right:1px}
.office{font:bold 18px "Open Sans",sans-serif;fill:#fff}
.tray{position:relative;display:flex;gap:10px;margin-right:18px}
.tray svg{width:20px;height:24px}
.clock{position:relative;font-size:14px;line-height:22px;text-align:center;color:#fff}
```
